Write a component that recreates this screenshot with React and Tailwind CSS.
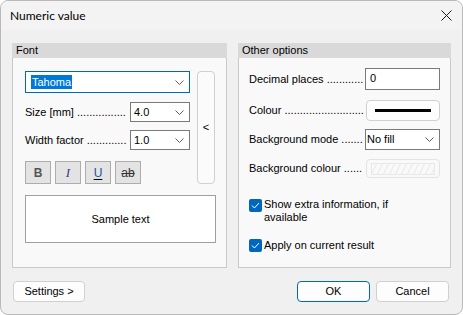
import React from "react";

const tah = { fontFamily: '"Liberation Sans", Arial, sans-serif' };

const Chevron = () => (
  <svg width="9" height="5" viewBox="0 0 9 5" className="shrink-0">
    <path d="M0.5 0.5 L4.5 4.5 L8.5 0.5" fill="none" stroke="#5f5f5f" strokeWidth="1" />
  </svg>
);

// label followed by a row of dots up to the field
const Leader = ({ label, dots }) => (
  <div className="flex min-w-0 flex-1 items-center whitespace-nowrap text-[11px] text-black">
    <span className="shrink-0">{label}&nbsp;</span>
    <span>{".".repeat(dots)}</span>
  </div>
);

const Select = ({ value }) => (
  <div className="flex h-[20px] w-[60px] items-center justify-between border border-[#7a7a7a] bg-white pl-[3px] pr-[5px] text-[11px] text-black">
    <span>{value}</span>
    <Chevron />
  </div>
);

const Check = () => (
  <div className="flex h-[13px] w-[13px] shrink-0 items-center justify-center rounded-[2px] bg-[#0067c0]">
    <svg width="9" height="7" viewBox="0 0 9 7">
      <path d="M1 3.5 L3.4 6 L8 1" fill="none" stroke="#ffffff" strokeWidth="1" />
    </svg>
  </div>
);

export default function App() {
  return (
    <div className="h-[315px] w-[463px] bg-white">
      <div className="flex h-[315px] w-[463px] flex-col overflow-hidden rounded-[8px] border border-[#b9b9b9] bg-[#f0f0f0]" style={tah}>
        {/* title bar */}
        <div className="flex h-[29px] shrink-0 items-center justify-between bg-[#f3f3f3] pl-[9px] pr-[10px]">
          <span className="text-[12px] text-black" style={{ fontFamily: 'Lato, "Liberation Sans", sans-serif' }}>Numeric value</span>
          <svg width="11" height="11" viewBox="0 0 11 11">
            <path d="M0.5 0.5 L10.5 10.5 M10.5 0.5 L0.5 10.5" stroke="#1a1a1a" strokeWidth="1" />
          </svg>
        </div>

        <div className="flex gap-[11px] pl-[11px] pt-[13px]">
          {/* Font group */}
          <div className="flex h-[225px] w-[215px] flex-col">
            <div className="h-[15px] bg-[#d9d9d9] pl-[4px] text-[11px] leading-[15px] text-black">Font</div>
            <div className="flex flex-1 flex-col border-x border-b border-[#c9c9c9] bg-[#f9f9f9] pl-[12px] pt-[13px]">
              <div className="flex gap-[7px]">
                <div className="flex w-[165px] flex-col">
                  <div className="flex h-[22px] items-center justify-between border border-[#0067c0] bg-white pl-[5px] pr-[5px]">
                    <span className="bg-[#0078d7] px-[1px] text-[11px] leading-[14px] text-white">Tahoma</span>
                    <Chevron />
                  </div>
                  <div className="mt-[9px] flex h-[20px] items-center">
                    <Leader label="Size [mm]" dots={16} />
                    <Select value="4.0" />
                  </div>
                  <div className="mt-[8px] flex h-[20px] items-center">
                    <Leader label="Width factor" dots={13} />
                    <Select value="1.0" />
                  </div>
                  <div className="mt-[11px] flex gap-[4px]">
                    <div className="flex h-[23px] w-[26px] items-center justify-center border border-[#adadad] bg-[#e3e3e3] text-[12px] font-bold text-[#555555]">B</div>
                    <div className="flex h-[23px] w-[26px] items-center justify-center border border-[#adadad] bg-[#e3e3e3] text-[13px] italic text-[#3a3a8a]" style={{ fontFamily: '"Liberation Serif", serif' }}>I</div>
                    <div className="flex h-[23px] w-[26px] items-center justify-center border border-[#adadad] bg-[#e3e3e3] text-[12px] text-[#1f4fa8] underline underline-offset-[2px] decoration-black">U</div>
                    <div className="flex h-[23px] w-[26px] items-center justify-center border border-[#adadad] bg-[#e3e3e3] text-[12px] text-[#333333] line-through">ab</div>
                  </div>
                </div>
                <div className="flex w-[18px] items-center justify-center rounded-[4px] border border-[#d0d0d0] bg-[#fbfbfb] text-[11px] text-black">&lt;</div>
              </div>
              <div className="mt-[11px] flex h-[48px] w-[191px] items-center justify-center border border-[#a0a0a0] bg-white text-[11px] text-black">
                Sample text
              </div>
            </div>
          </div>

          {/* Other options group */}
          <div className="flex h-[225px] w-[213px] flex-col">
            <div className="h-[15px] bg-[#d9d9d9] pl-[4px] text-[11px] leading-[15px] text-black">Other options</div>
            <div className="flex flex-1 flex-col border-x border-b border-[#c9c9c9] bg-[#f9f9f9] pl-[10px] pr-[10px] pt-[10px]">
              <div className="flex h-[22px] items-center">
                <Leader label="Decimal places" dots={12} />
                <div className="flex h-[22px] w-[75px] items-start border border-[#7a7a7a] bg-white pl-[4px] pt-[1px] text-[11px] text-black">0</div>
              </div>
              <div className="mt-[10px] flex h-[21px] items-center">
                <Leader label="Colour" dots={26} />
                <div className="flex h-[21px] w-[74px] items-center justify-center rounded-[4px] border border-[#d0d0d0] bg-[#fdfdfd]">
                  <div className="h-[3px] w-[56px] bg-black" />
                </div>
              </div>
              <div className="mt-[8px] flex h-[21px] items-center">
                <Leader label="Background mode" dots={7} />
                <div className="flex h-[21px] w-[75px] items-center justify-between border border-[#7a7a7a] bg-white pl-[1px] pr-[5px] text-[11px] text-black">
                  <span>No fill</span>
                  <Chevron />
                </div>
              </div>
              <div className="mt-[9px] flex h-[19px] items-center">
                <Leader label="Background colour" dots={6} />
                <div className="flex h-[19px] w-[74px] items-center justify-center rounded-[4px] border border-[#e3e3e3] bg-[#f9f9f9]">
                  <svg width="64" height="12" viewBox="0 0 64 12">
                    <defs>
                      <pattern id="hatch" width="6" height="12" patternUnits="userSpaceOnUse">
                        <path d="M0 12 L6 0" stroke="#e6e6e6" strokeWidth="1" />
                      </pattern>
                    </defs>
                    <rect x="0.5" y="0.5" width="63" height="11" fill="url(#hatch)" stroke="#e8e8e8" />
                  </svg>
                </div>
              </div>
              <div className="mt-[20px] flex items-start gap-[2px]">
                <div className="mt-[1px]"><Check /></div>
                <div className="text-[11px] leading-[13px] text-black">
                  Show extra information, if<br />available
                </div>
              </div>
              <div className="mt-[15px] flex items-center gap-[2px]">
                <Check />
                <div className="text-[11px] leading-[13px] text-black">Apply on current result</div>
              </div>
            </div>
          </div>
        </div>

        {/* bottom buttons */}
        <div className="flex items-center pl-[12px] pr-[13px] pt-[13px]">
          <div className="flex h-[21px] w-[72px] items-center justify-center rounded-[4px] border border-[#d0d0d0] bg-[#fdfdfd] text-[11px] text-black">Settings &gt;</div>
          <div className="flex-1" />
          <div className="flex h-[21px] w-[73px] items-center justify-center rounded-[4px] border border-[#0067c0] bg-[#fdfdfd] text-[11px] text-black">OK</div>
          <div className="ml-[6px] flex h-[21px] w-[73px] items-center justify-center rounded-[4px] border border-[#d0d0d0] bg-[#fdfdfd] text-[11px] text-black">Cancel</div>
        </div>
      </div>
    </div>
  );
}
